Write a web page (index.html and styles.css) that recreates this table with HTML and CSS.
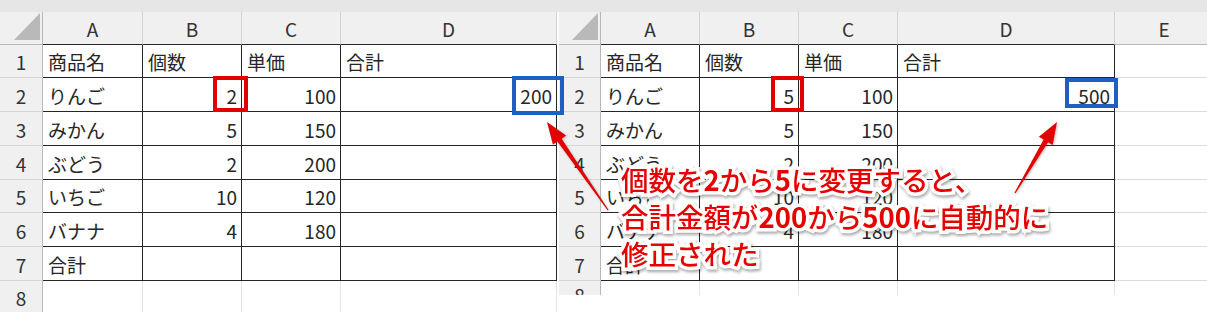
FILE: index.html
```html
<!DOCTYPE html>
<html lang="ja">
<head>
<meta charset="utf-8">
<title>個数の変更と合計の自動修正</title>
<link rel="stylesheet" href="styles.css">
</head>
<body>
<div class="page">
  <section class="sheet sheet-left">
    <div class="strip"></div>
    <div class="grid grid-left">
      <div class="c corner"><span class="tri"></span></div>
      <div class="c h th">A</div><div class="c h th">B</div><div class="c h th">C</div><div class="c h th">D</div>

      <div class="c r">1</div><div class="c t">商品名</div><div class="c t">個数</div><div class="c t">単価</div><div class="c t">合計</div>
      <div class="c r">2</div><div class="c t">りんご</div><div class="c t n">2</div><div class="c t n">100</div><div class="c t n">200</div>
      <div class="c r">3</div><div class="c t">みかん</div><div class="c t n">5</div><div class="c t n">150</div><div class="c t"></div>
      <div class="c r">4</div><div class="c t">ぶどう</div><div class="c t n">2</div><div class="c t n">200</div><div class="c t"></div>
      <div class="c r">5</div><div class="c t">いちご</div><div class="c t n">10</div><div class="c t n">120</div><div class="c t"></div>
      <div class="c r">6</div><div class="c t">バナナ</div><div class="c t n">4</div><div class="c t n">180</div><div class="c t"></div>
      <div class="c r">7</div><div class="c t">合計</div><div class="c t"></div><div class="c t"></div><div class="c t"></div>
      <div class="c r last">8</div><div class="c e"></div><div class="c e"></div><div class="c e"></div><div class="c e"></div>
    </div>
  </section>

  <section class="sheet sheet-right">
    <div class="strip"></div>
    <div class="grid grid-right">
      <div class="c corner"><span class="tri"></span></div>
      <div class="c h th">A</div><div class="c h th">B</div><div class="c h th">C</div><div class="c h th">D</div><div class="c h">E</div>

      <div class="c r">1</div><div class="c t">商品名</div><div class="c t">個数</div><div class="c t">単価</div><div class="c t">合計</div><div class="c x"></div>
      <div class="c r">2</div><div class="c t">りんご</div><div class="c t n">5</div><div class="c t n">100</div><div class="c t n">500</div><div class="c x"></div>
      <div class="c r">3</div><div class="c t">みかん</div><div class="c t n">5</div><div class="c t n">150</div><div class="c t"></div><div class="c x"></div>
      <div class="c r">4</div><div class="c t">ぶどう</div><div class="c t n">2</div><div class="c t n">200</div><div class="c t"></div><div class="c x"></div>
      <div class="c r">5</div><div class="c t">いちご</div><div class="c t n">10</div><div class="c t n">120</div><div class="c t"></div><div class="c x"></div>
      <div class="c r">6</div><div class="c t">バナナ</div><div class="c t n">4</div><div class="c t n">180</div><div class="c t"></div><div class="c x"></div>
      <div class="c r">7</div><div class="c t">合計</div><div class="c t"></div><div class="c t"></div><div class="c t"></div><div class="c x"></div>
      <div class="c r last short">8</div><div class="c e"></div><div class="c e"></div><div class="c e"></div><div class="c e"></div><div class="c e"></div>
    </div>
  </section>

  <!-- highlight frames around the changed cells -->
  <div class="mark mark-qty-a"></div>
  <div class="mark mark-sum-a"></div>
  <div class="mark mark-qty-b"></div>
  <div class="mark mark-sum-b"></div>

  <!-- callout arrows pointing at both totals -->
  <svg class="arrows" width="1207" height="312" viewBox="0 0 1207 312">
    <polygon points="547,122 566.1,135.5 561.6,138.7 608.5,209.7 607.5,210.3 557.4,141.5 552.9,144.6"/>
    <polygon points="1057,122 1052.7,145 1048,142.2 1015.5,193.3 1014.5,192.7 1043.6,139.6 1038.9,136.8"/>
  </svg>

  <p class="note">個数を<b>2</b>から<b>5</b>に変更すると、<br>合計金額が<b>200</b>から<b>500</b>に自動的に<br>修正された</p>
</div>
</body>
</html>
```

FILE: styles.css
```css
body {
  margin: 0;
  background: #fff;
  font-family: "Noto Sans CJK JP", "Noto Sans", sans-serif;
}

.page {
  position: relative;
  width: 1207px;
  height: 312px;
  overflow: hidden;
  display: flex;
}

/* worksheet panes */
.sheet {
  display: flex;
  flex-direction: column;
  overflow: hidden;
}
.sheet-left { width: 559px; flex: none; }
.sheet-right { flex: 1; }

.strip {
  height: 12px;
  background: #e6e6e6;
}

.grid { display: grid; }
.grid-left {
  grid-template-columns: 43px 100px 99px 99px 216px;
  grid-template-rows: 33px 33px 34px 34px 34px 33px 34px 34px 31px;
}
.grid-right {
  grid-template-columns: 42px 99px 99px 99px 217px 99px;
  grid-template-rows: 33px 33px 34px 34px 34px 33px 34px 34px 14px;
}

/* cells */
.c {
  box-sizing: border-box;
  display: flex;
  align-items: center;
  padding: 1px 5px 0;
  font-size: 19px;
  color: #262626;
  white-space: nowrap;
  overflow: hidden;
  border-right: 1px solid #dadada;
  border-bottom: 1px solid #dadada;
}

.corner {
  background: #f0f0f0;
  justify-content: flex-end;
  align-items: flex-end;
  padding: 0 2px 4px 0;
  border-right: 1px solid #b8b8b8;
  border-bottom: 1px solid #b8b8b8;
}
.tri {
  width: 26px;
  height: 27px;
  background: #b9b9b9;
  clip-path: polygon(100% 0, 100% 100%, 0 100%);
}

.h {
  background: #f0f0f0;
  justify-content: center;
  color: #333;
  border-right: 1px solid #d2d2d2;
  border-bottom: 1px solid #b8b8b8;
}
.th { border-bottom-color: #262626; }

.r {
  background: #f0f0f0;
  justify-content: center;
  color: #333;
  border-right: 1px solid #b8b8b8;
  border-bottom: 1px solid #d6d6d6;
}
.r.last { align-items: flex-start; padding-top: 3px; border-bottom: none; }
.r.short { padding-top: 0; }

.t {
  border-right: 1px solid #262626;
  border-bottom: 1px solid #262626;
}
.n { justify-content: flex-end; padding-right: 4px; }

.e {
  border-right: 1px solid #e3e3e3;
  border-bottom: none;
}
.x {
  border-right: none;
  border-bottom: 1px solid #dcdcdc;
}

/* highlight frames */
.mark {
  position: absolute;
  box-sizing: border-box;
}
.mark-qty-a { left: 213px; top: 76px; width: 35px; height: 36px; border: 4px solid #e30000; }
.mark-sum-a { left: 512px; top: 76px; width: 52px; height: 39px; border: 4px solid #1f5fbf; }
.mark-qty-b { left: 771px; top: 76px; width: 33px; height: 36px; border: 4px solid #e30000; }
.mark-sum-b { left: 1065px; top: 78px; width: 53px; height: 30px; border: 4px solid #1f5fbf; }

/* arrows */
.arrows {
  position: absolute;
  left: 0;
  top: 0;
  fill: #e30000;
  filter: drop-shadow(1px 1px 1px rgba(0, 0, 0, 0.25));
}

/* callout text */
.note {
  position: absolute;
  left: 621px;
  top: 161px;
  margin: 0;
  font-size: 27.5px;
  line-height: 37px;
  font-weight: 500;
  color: #e60000;
  white-space: nowrap;
  -webkit-text-stroke: 7px #fff;
  paint-order: stroke fill;
  filter: drop-shadow(1px 2px 1.5px rgba(0, 0, 0, 0.35));
}
.note b { font-weight: 700; }
```
